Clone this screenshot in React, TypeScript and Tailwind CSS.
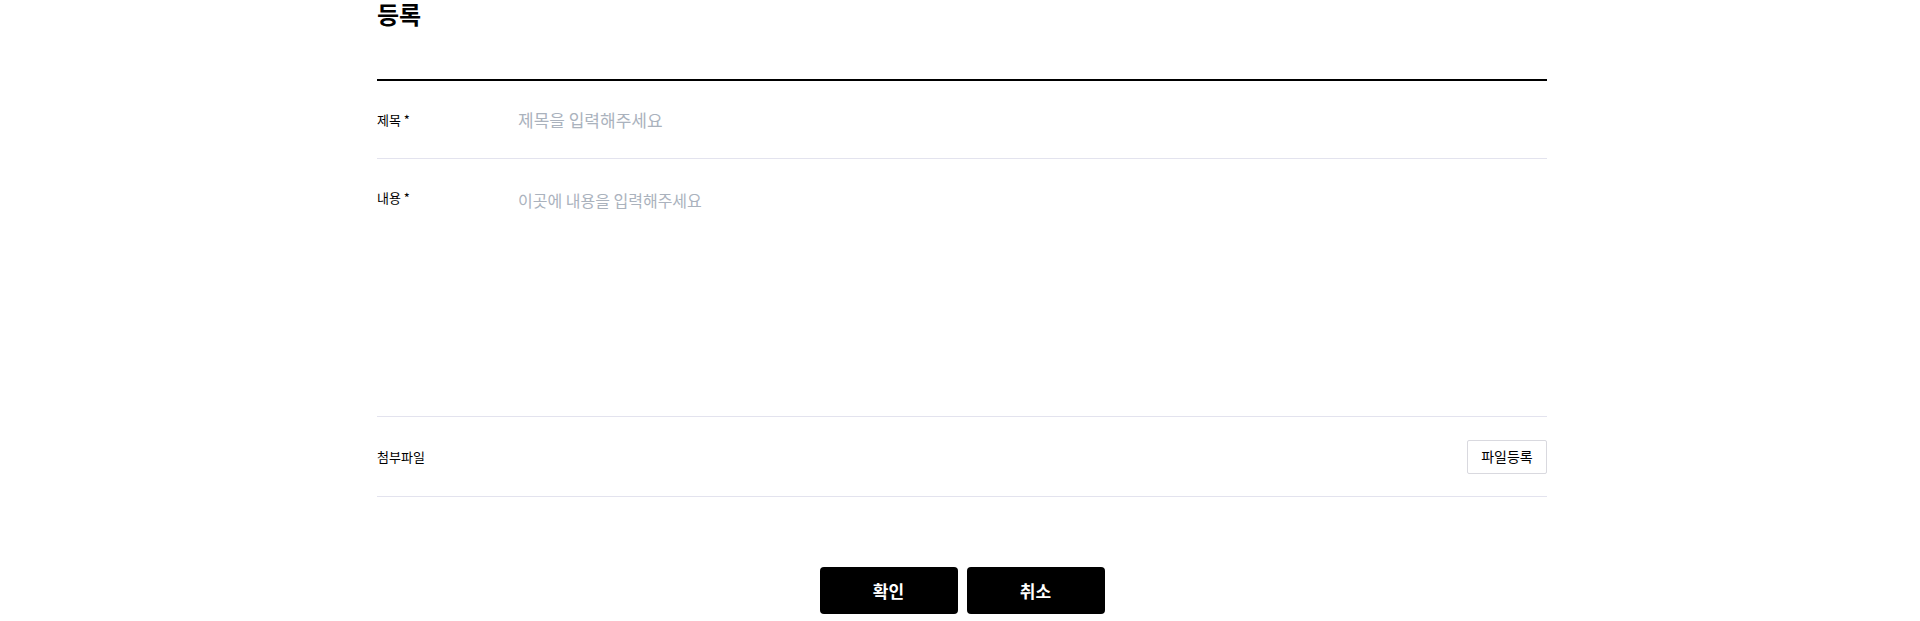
import { useState } from 'react';

const font = { fontFamily: '"Noto Sans CJK KR", "Noto Sans", sans-serif' };

export default function App() {
  const [title, setTitle] = useState('');
  const [content, setContent] = useState('');

  return (
    <div className="bg-white text-black" style={font}>
      <div className="w-[1170px] ml-[377px]">
        <h1 className="text-[24px] leading-[28px] font-bold">등록</h1>

        <form className="mt-[51px] border-t-2 border-black" onSubmit={(e) => e.preventDefault()}>
          <div className="flex items-center h-[78px] border-b border-[#e3e3ee]">
            <label className="w-[141px] text-[13px] leading-5">제목 *</label>
            <input
              value={title}
              onChange={(e) => setTitle(e.target.value)}
              placeholder="제목을 입력해주세요"
              className="flex-1 text-[17px] leading-6 outline-none placeholder:text-[#aab2bd]"
            />
          </div>

          <div className="flex h-[258px] pt-[29px] border-b border-[#e3e3ee]">
            <label className="w-[141px] text-[13px] leading-5">내용 *</label>
            <textarea
              value={content}
              onChange={(e) => setContent(e.target.value)}
              placeholder="이곳에 내용을 입력해주세요"
              className="flex-1 h-[200px] p-0 text-[16px] leading-6 resize-none outline-none placeholder:text-[#aab2bd]"
            />
          </div>

          <div className="flex items-center justify-between h-[80px] border-b border-[#e3e3ee]">
            <span className="text-[13px] leading-5">첨부파일</span>
            <button
              type="button"
              className="h-[34px] w-[80px] rounded-[2px] border border-[#d9d9df] bg-white text-[14px]"
            >
              파일등록
            </button>
          </div>

          <div className="flex justify-center gap-[9px] mt-[70px]">
            <button type="submit" className="w-[138px] h-[47px] rounded-[4px] bg-black text-white text-[17px] font-bold">
              확인
            </button>
            <button type="button" className="w-[138px] h-[47px] rounded-[4px] bg-black text-white text-[17px] font-bold">
              취소
            </button>
          </div>
        </form>
      </div>
    </div>
  );
}
